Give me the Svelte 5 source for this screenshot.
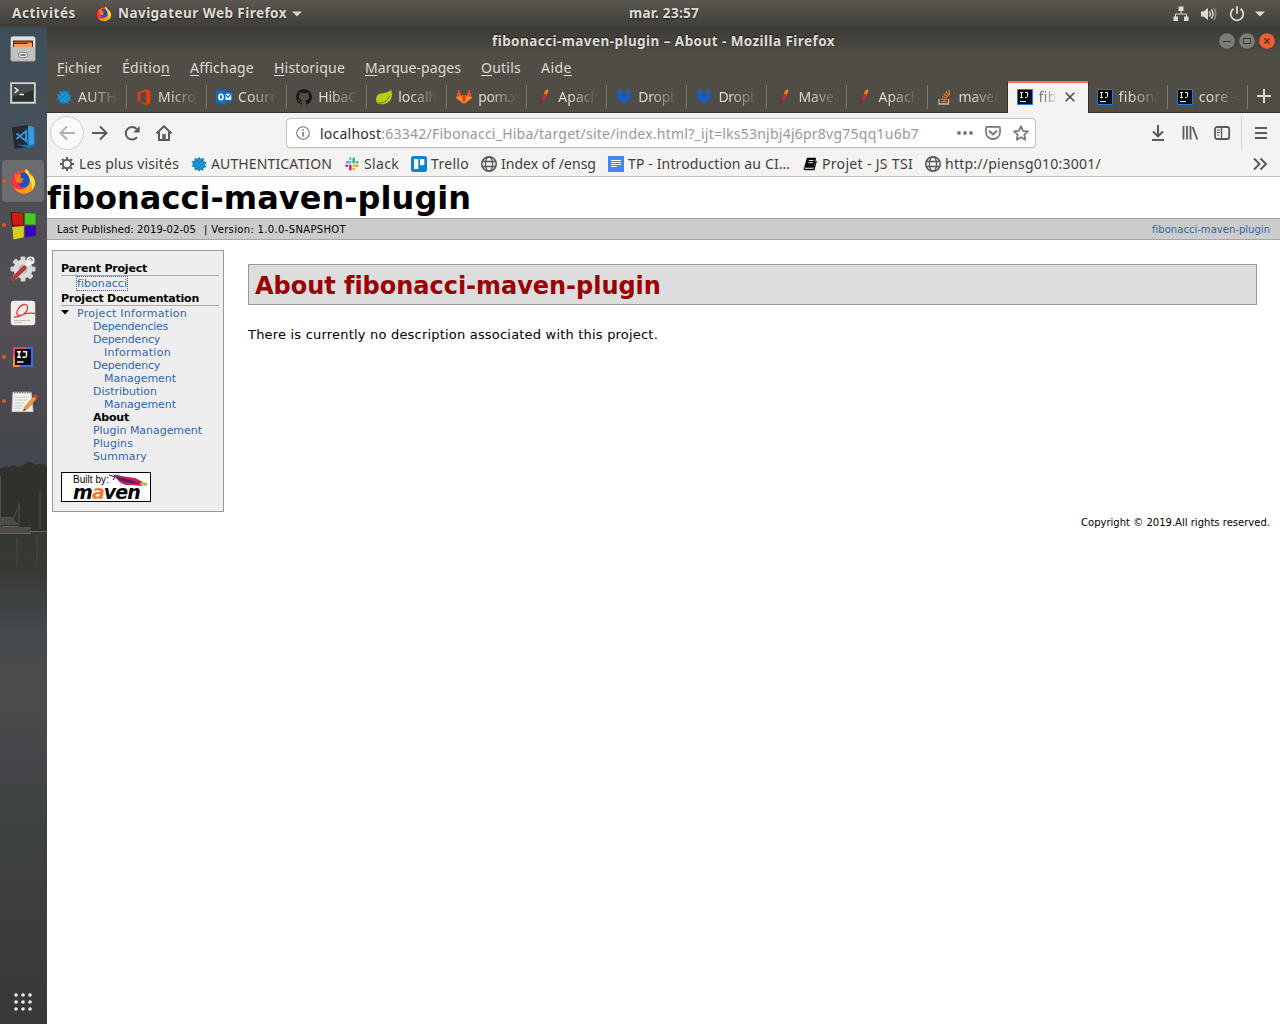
<script>
  // Spreads a label's letters so it fills the given width.
  function fit(node, width) {
    const natural = node.getBoundingClientRect().width;
    node.style.letterSpacing = (width - natural) / node.textContent.length + 'px';
  }

  const menus = [
    { a: '', k: 'F', b: 'ichier', w: 45 },
    { a: 'Éditio', k: 'n', b: '', w: 48 },
    { a: '', k: 'A', b: 'ffichage', w: 64 },
    { a: '', k: 'H', b: 'istorique', w: 71 },
    { a: '', k: 'M', b: 'arque-pages', w: 96 },
    { a: '', k: 'O', b: 'utils', w: 40 },
    { a: 'Aid', k: 'e', b: '', w: 31 }
  ];
  const tabs = [
    { icon: 'auth', t: 'AUTH', w: 39 },
    { icon: 'office', t: 'Micro', w: 38 },
    { icon: 'outlook', t: 'Courr', w: 38 },
    { icon: 'github', t: 'HibaC', w: 39 },
    { icon: 'spring', t: 'localh', w: 39 },
    { icon: 'gitlab', t: 'pom.x', w: 39 },
    { icon: 'feather', t: 'Apach', w: 41 },
    { icon: 'dropbox', t: 'Dropb', w: 40 },
    { icon: 'dropbox', t: 'Dropb', w: 40 },
    { icon: 'feather', t: 'Maven', w: 44 },
    { icon: 'feather', t: 'Apach', w: 41 },
    { icon: 'stack', t: 'maven', w: 44 },
    { icon: 'idea', t: 'fibo', w: 27, active: true },
    { icon: 'idea', t: 'fibona', w: 44 },
    { icon: 'idea', t: 'core –', w: 41 }
  ];
  const bookmarks = [
    { icon: 'gear', t: 'Les plus visités', w: 100 },
    { icon: 'auth', t: 'AUTHENTICATION', w: 121 },
    { icon: 'slack', t: 'Slack', w: 35 },
    { icon: 'trello', t: 'Trello', w: 38 },
    { icon: 'globe', t: 'Index of /ensg', w: 95 },
    { icon: 'doc', t: 'TP - Introduction au CI…', w: 162 },
    { icon: 'book', t: 'Projet - JS TSI', w: 91 },
    { icon: 'globe', t: 'http://piensg010:3001/', w: 156 }
  ];
  const dock = [
    { icon: 'files' }, { icon: 'terminal' }, { icon: 'vscode' },
    { icon: 'firefox', run: true, active: true },
    { icon: 'blocks', run: true }, { icon: 'tools' }, { icon: 'pdf' },
    { icon: 'ideaDock', run: true }, { icon: 'notes', run: true }
  ];
  const docs = [
    { lines: ['Dependencies'], w: [75] },
    { lines: ['Dependency', 'Information'], w: [67, 67] },
    { lines: ['Dependency', 'Management'], w: [67, 72] },
    { lines: ['Distribution', 'Management'], w: [64, 72] },
    { lines: ['About'], w: [36], current: true },
    { lines: ['Plugin Management'], w: [109] },
    { lines: ['Plugins'], w: [40] },
    { lines: ['Summary'], w: [54] }
  ];
  const dots = [6, 13, 20];
  const teeth = [0, 45, 90, 135, 180, 225, 270, 315];
</script>

{#snippet fox()}
  <circle cx="12" cy="13" r="10.6" fill="#ff4f1e" />
  <path d="M1.4 14C1 9 2.500 6 4.500 4.200l.8 2.300c1.500-.8 3-.7 4.200.2L8 10l5 8-5 5.200C4 22 1.600 18 1.400 14z" fill="#ff2d3d" />
  <path d="M14 1c2 1 3 2.700 3.500 4.700 2.800 1.300 5.700 4.500 5.100 9.200C21.800 21 16.500 24 11.500 23.600 7 23 4 20.500 3 17c2.500 3 6 3.600 9 2.400 5-2 6-7 3.500-10.400C14 7 13 4 14 1z" fill="#ffa514" />
  <path d="M14 1c2 1 3 2.700 3.500 4.700 2.800 1.300 5.700 4.500 5.100 9.200-.3 2.300-1.500 4.400-3 5.800 1.200-5-.3-8.700-3-11.200C14 7 13 4 14 1z" fill="#ffe335" />
  <path d="M7 9c1-3.500 4-5.500 7-4.500 1.500 1 3 3 3.500 5.500 1 4-1 7.500-4.500 8-3.500.3-6-2-6.300-5 1.500 1.300 3.500 1.300 5-.3-2-.2-2.600-1.300-2-2.500C9 9.500 8.200 9 7 9z" fill="#1b4fc4" />
  <path d="M4.500 4.200l.8 2.300c2-.8 4-.4 4.700.5l-1 2.200 3.200.6c.3 1.200-1 1.900-2.400 2.300l.5 1.600c-2 1-4.300.3-5.300-1.700C4 10 3.800 7 4.500 4.200z" fill="#ff7a18" />
{/snippet}

{#snippet icon(name)}
  {#if name === 'auth'}
    <svg class="i16" viewBox="0 0 16 16"><path d="M3.500 2l3 .8L8 .8l1.700 2L13 2l-.5 3.300 3 1-1.400 2.400 1.400 2.600-3 .4-.2 3-3-.9L8 15.700l-1.600-2-3 .6.3-3-3-1L2 7.700.5 5.200l3-.2z" fill="#1186c8" /><path d="M3 9.500L9.500 3.500M5 12L12.500 5M8 13l5.500-5" stroke="#5aafe0" stroke-width=".7" /></svg>
  {:else if name === 'office'}
    <svg class="i16" viewBox="0 0 16 16"><path d="M1.500 3.500L10 .2l4.500 1.300v13L10 15.900l-8.500-3L10 14V2.800L4.500 4v7.600l-3 1.300z" fill="#e43d08" /></svg>
  {:else if name === 'outlook'}
    <svg class="i16" viewBox="0 0 16 16"><path d="M0 2l9.500-2v16L0 14z" fill="#0a6fc4" /><path d="M9.500 3H16v10H9.500z" fill="#0a6fc4" /><path d="M9.500 4.800h5.700v6H9.500z" fill="#fff" /><path d="M10 6l2 2.300L15 5" fill="none" stroke="#0a6fc4" stroke-width="1.200" /><ellipse cx="5" cy="8" rx="2" ry="2.700" fill="none" stroke="#fff" stroke-width="1.600" /></svg>
  {:else if name === 'github'}
    <svg class="i16" viewBox="0 0 16 16"><path fill="#191717" d="M8 0C3.580 0 0 3.580 0 8c0 3.540 2.290 6.530 5.470 7.590.4.070.55-.17.55-.38 0-.19-.01-.82-.01-1.490-2.010.37-2.530-.49-2.690-.94-.09-.23-.48-.94-.82-1.130-.28-.15-.68-.52-.01-.53.63-.01 1.080.58 1.230.82.72 1.210 1.870.87 2.330.66.070-.52.28-.87.51-1.070-1.780-.2-3.640-.89-3.640-3.950 0-.87.31-1.590.82-2.150-.08-.2-.36-1.020.08-2.120 0 0 .67-.21 2.200.82a7.500 7.500 0 0 1 4 0c1.530-1.040 2.200-.82 2.200-.82.44 1.100.16 1.920.08 2.120.51.56.82 1.270.82 2.150 0 3.070-1.870 3.750-3.650 3.950.29.25.54.73.54 1.480 0 1.070-.01 1.930-.01 2.200 0 .21.15.46.55.38A8 8 0 0 0 16 8c0-4.420-3.580-8-8-8z" /></svg>
  {:else if name === 'spring'}
    <svg class="i16" viewBox="0 0 16 16"><path d="M15 .5c1.800 5 1 10-2.500 12.600C9 15.800 4 16 1.500 14.200-.5 12-.4 8 2 5.800 5 3.200 12.500 5 15 .5z" fill="#b9ce12" /><path d="M2 14c5 .5 10-2 11.500-7.500" fill="none" stroke="#5e7f0c" stroke-width="1" /></svg>
  {:else if name === 'gitlab'}
    <svg class="i16" viewBox="0 0 16 16"><path d="M0 9L3 .8 5.200 6.500h5.600L13 .8 16 9l-8 6z" fill="#fc8a28" /><path d="M5 6.500h6L8 15z" fill="#e24329" /><path d="M0 9L3 .8 5.200 6.500zM16 9L13 .8l-2.200 5.700z" fill="#e8502b" /></svg>
  {:else if name === 'feather'}
    <svg class="i16" viewBox="0 0 16 16"><path d="M5 14c0-4.500 1.800-8.500 4.700-13L12 0q.6 1.500 0 3C10.500 7 8.800 10.500 6.600 12.500z" fill="#d3203c" /><path d="M9 2L12 0q.6 1.500 0 3l-1.200 2.800q-1.300-1.200-3-.8z" fill="#f3801f" /><path d="M5.200 10.500L4 16l2.900-4z" fill="#5a2a5c" /></svg>
  {:else if name === 'dropbox'}
    <svg class="i16" viewBox="0 0 16 16"><path fill="#0a62f5" d="M4.200.8L8 3.300 4.200 5.800.2 3.300zM11.800.8l4 2.500-4 2.500L8 3.300zM4.200 5.800L8 8.300l-3.800 2.500L.2 8.300zM11.800 5.800l4 2.500-4 2.500L8 8.300zM8 9.300l3.800 2.500L8 14.500l-3.800-2.700z" /></svg>
  {:else if name === 'stack'}
    <svg class="i16" viewBox="0 0 16 16"><path d="M2 10v5h9.500v-5" fill="none" stroke="#b9b9b5" stroke-width="1.300" /><path d="M4 12.800h5.500M4.200 10.200l5.300.8M5 7.500l4.900 2M6.700 4.700l4 3.400M9 2.300l2.700 4.300M12 .8l.8 5" stroke="#ee7518" stroke-width="1.300" /></svg>
  {:else if name === 'idea'}
    <svg class="i16" viewBox="0 0 16 16"><path d="M.5.500h15v15H.5z" fill="#080808" stroke="#137bf4" /><path d="M3 3.500h3M3 8.500h3M4.500 3.500v5M8 3.500h2.500v3.700q0 1.300-1.300 1.300H8" fill="none" stroke="#e8e8e8" /><path d="M3 12.500h6" stroke="#fff" /></svg>
  {:else if name === 'gear'}
    <svg class="i16" viewBox="0 0 16 16"><circle cx="8" cy="8" r="4.200" fill="none" stroke="#5a5a5a" stroke-width="1.900" />{#each teeth as r}<path d="M7 1h2v2.600H7z" fill="#5a5a5a" transform="rotate({r} 8 8)" />{/each}</svg>
  {:else if name === 'slack'}
    <svg class="i16" viewBox="0 0 16 16" stroke-width="2.600" stroke-linecap="round"><path d="M6.300 2.500v.2M2.800 6.300h3.500" stroke="#36c5f0" /><path d="M9.700 2.700v3.600M13.300 6.300h-.2" stroke="#2eb67d" /><path d="M9.700 9.700h3.600M9.700 13.300v-.2" stroke="#ecb22e" /><path d="M2.700 9.700h.2M6.300 13.300V9.700" stroke="#e01e5a" /></svg>
  {:else if name === 'trello'}
    <svg class="i16" viewBox="0 0 16 16"><rect width="16" height="16" rx="2.500" fill="#0b84cf" /><rect x="3" y="3" width="4.300" height="10" rx=".6" fill="#fff" /><rect x="9" y="3" width="4.300" height="6.300" rx=".6" fill="#fff" /></svg>
  {:else if name === 'globe'}
    <svg class="i16" viewBox="0 0 16 16" fill="none" stroke="#5a5a5a" stroke-width="1.300"><circle cx="8" cy="8" r="7.200" stroke-width="1.600" /><ellipse cx="8" cy="8" rx="3.600" ry="7" /><path d="M1.500 5.500h13M1.500 10.500h13" /></svg>
  {:else if name === 'doc'}
    <svg class="i16" viewBox="0 0 16 16"><path d="M0 0h16v16H0z" fill="#4285f4" /><path d="M3 4.500h10M3 6.500h10M3 8.500h10M3 10.500h6" stroke="#fff" /></svg>
  {:else if name === 'book'}
    <svg class="i16" viewBox="0 0 16 16"><path d="M5.500 2.500h7.800L11 11H3z" fill="#0a0a0a" stroke="#0a0a0a" stroke-width="1.500" stroke-linejoin="round" /><path d="M6.800 4.500h4.800M6.300 6.700h4.800" stroke="#ddd" /><path d="M2.300 11.500c-.3 1.500.3 2 1.200 2h8.400L14.300 5" fill="none" stroke="#0a0a0a" stroke-width="1.300" /></svg>
  {:else if name === 'files'}
    <svg class="i26" viewBox="0 0 26 26"><rect x=".5" y=".5" width="25" height="25" rx="2" fill="#aaaaa7" /><path d="M1 2.500q0-2 2-2h20q2 0 2 2V11H1z" fill="#e0e0dd" /><path d="M3 4.500h20V11H3z" fill="#4a2413" /><path d="M4 5.500h18v1.700H4z" fill="#b8531c" /><path d="M4 8h13l1-1h4v4H4z" fill="#eda066" /><path d="M1 11h24v13.500H1z" fill="#c0c0bd" /><rect x="8.500" y="16.500" width="9" height="5" rx="2.500" fill="#e8e8e6" stroke="#8d8d8a" /><path d="M10.500 19h5" stroke="#444" stroke-width="1.300" /></svg>
  {:else if name === 'terminal'}
    <svg class="i26" viewBox="0 0 26 26"><path d="M1.200 3.200h23.600v19.600H1.200z" fill="#2a2e2d" stroke="#d2d2ce" stroke-width="2" /><path d="M2.200 4.200h21.600v6l-21.600 7z" fill="#454947" /><path d="M4.500 7.500l3.500 2.700-3.500 2.700M9.500 14.500h4.500" fill="none" stroke="#eee" stroke-width="1.500" /></svg>
  {:else if name === 'vscode'}
    <svg class="i26" viewBox="0 0 26 26"><path d="M2 3.500L18 1l3 21.500L4.500 25z" fill="#262a2f" /><path d="M18 1.500l7 2V21l-6 3-13-3.500 11 .5z" fill="#1673b8" /><path d="M18 1.500l5.500 1.700L24 20l-5 1.500z" fill="#3a9be0" /><path d="M6.500 9.500L16 17V7.200L6.500 15" fill="none" stroke="#2f95dc" stroke-width="2" /></svg>
  {:else if name === 'firefox'}
    <svg class="i28" viewBox="0 0 24 25">{@render fox()}</svg>
  {:else if name === 'blocks'}
    <svg class="i28" viewBox="0 0 28 28"><path d="M.5 0L14 1v13l-12 1z" fill="#1a1a18" /><path d="M1.500.5l12 .5v12.500L3 14z" fill="#cf1c0c" /><path d="M15.500 1l11 .8v11.200H15.500z" fill="#3fce22" /><path d="M2.500 15.500l12-1-.3 12L3.500 28.500z" fill="#d3ce20" /><path d="M15.700 14.200h11v10.500l-11 1.500z" fill="#3604ba" /></svg>
  {:else if name === 'tools'}
    <svg class="i26" viewBox="0 0 26 26">{#each teeth as r}<rect x="10.500" y=".5" width="5" height="5" rx="1" fill="#d4d5d3" transform="rotate({r} 13 13)" />{/each}<circle cx="13" cy="13" r="7" fill="#b9bab8" stroke="#dcdddb" stroke-width="5" /><path d="M15 10l4.500-4" stroke="#fafafa" stroke-width="3" stroke-linecap="round" /><circle cx="20.500" cy="4.500" r="3.200" fill="none" stroke="#fafafa" stroke-width="1.800" /><path d="M3 23L14.500 11.500" stroke="#b83a38" stroke-width="4.200" stroke-linecap="round" /></svg>
  {:else if name === 'pdf'}
    <svg class="i26" viewBox="0 0 26 26"><rect x=".8" y=".8" width="24.400" height="24.400" rx="3" fill="#eeeeec" /><path d="M4 17C10 17.500 18 13 17.500 7 17 2.500 11 4 8 9.500 5 15 8 16.500 13 14.500q6-2 12-1" fill="none" stroke="#dd3b40" stroke-width="1.300" /><path d="M4 20.500h17M4 22.500h8" stroke="#c4c4c2" /></svg>
  {:else if name === 'ideaDock'}
    <svg class="i22" viewBox="0 0 22 22"><path d="M1 1h20v20H1z" fill="#3b6fe0" /><path d="M1 1h13L8 21H1z" fill="#ef3f6d" /><path d="M1 9l7 12H1z" fill="#f59032" /><path d="M3 3h16v16H3z" fill="#0a0a0a" /><path d="M5 5.700h4M5 11.300h4M7 5.700v5.600M11 5.700h3.500v3.900q0 1.700-1.700 1.700H10.500" fill="none" stroke="#fff" stroke-width="1.400" /><path d="M5 16h6.500" stroke="#fff" stroke-width="1.400" /></svg>
  {:else if name === 'notes'}
    <svg class="i28" viewBox="0 0 28 28"><path d="M3 4.500h19L24 24.500H2z" fill="#f1f1ef" stroke="#ccc" stroke-width=".7" /><path d="M4.500 4.500h17" stroke="#777" stroke-width="2.600" stroke-dasharray="1.300 1.300" /><path d="M5 9.500h14M5 12.500h14M5 15.500h10M4.500 18.500h9M4.500 21h7" stroke="#c3c3c3" stroke-width=".9" /><path d="M15 20L24.500 8.800l3 2.300L18 22l-4 1.500z" fill="#f19a38" stroke="#a96a2a" stroke-width=".5" /><path d="M24.500 8.800l1.800-2.200 3 2.300-1.800 2.200z" fill="#e23b3b" /><path d="M14 23.500l.6-2 1.400 1.200z" fill="#222" /></svg>
  {/if}
{/snippet}

<div class="desktop">
  <header class="topbar">
    <div class="left">
      <b use:fit={64}>Activités</b>
      <svg class="i16 ff" viewBox="0 0 24 25">{@render fox()}</svg>
      <b use:fit={169}>Navigateur Web Firefox</b>
      <svg class="caret" viewBox="0 0 10 6"><path d="M0 .5h10L5 5.500z" fill="#d5d3cc" /></svg>
    </div>
    <b class="clock" use:fit={70}>mar. 23:57</b>
    <div class="status">
      <svg class="i16" viewBox="0 0 16 16" fill="#dcdad5"><path d="M5.500.5h5v4.500h-5zM.5 10.500h4.500v4.500H.5zM11 10.500h4.500v4.500H11z" /><path d="M8 5v3M2.500 11V8h11v3" fill="none" stroke="#dcdad5" /></svg>
      <svg class="i16" viewBox="0 0 16 16"><path d="M0 5.500h2.500L7 2v12L2.500 10.500H0z" fill="#dcdad5" /><path d="M8.500 5.500q1.500 2.500 0 5M10.500 3.500q3 4.500 0 9" fill="none" stroke="#dcdad5" stroke-width="1.500" /><path d="M13 2q3.500 6 0 12" fill="none" stroke="#8c8a84" stroke-width="1.500" /></svg>
      <svg class="i16" viewBox="0 0 16 16" fill="none" stroke="#dcdad5" stroke-width="1.800"><path d="M4.500 2.800a6.300 6.300 0 1 0 7 0M8 .3v7.500" /></svg>
      <svg class="caret" viewBox="0 0 10 6"><path d="M0 .5h10L5 5.500z" fill="#dcdad5" /></svg>
    </div>
  </header>

  <div class="workspace">
    <aside class="dock">
      <svg class="harbour" viewBox="0 0 47 120">
        <path d="M0 7q4-4 9-2 5-3 8 0 6-1 9-4 5-2 10 2 6-3 11 1v66H0z" fill="#30312d" />
        <path d="M0 70h47v50H0z" fill="#363933" />
        <path d="M.5 14v54M40 29v38M19 41v26M11 62l8-18" stroke="#5f5f5d" stroke-width=".7" fill="none" />
        <path d="M0 55h12l3 4 4 4H0z" fill="#4b4b48" />
        <path d="M0 65h31v6H0z" fill="#4e4c49" />
        <path d="M0 71.500h31M30 69.500h17M2 64.500h16" stroke="#67655f" />
        <path d="M17 75v30M37 73v32" stroke="#4b4e49" />
      </svg>
      {#each dock as d}
        <div class="slot" class:run={d.run} class:active={d.active}>{@render icon(d.icon)}</div>
      {/each}
      <svg class="grid" viewBox="0 0 26 26">{#each dots as y}{#each dots as x}<circle cx={x} cy={y} r="1.800" fill="#eee" />{/each}{/each}</svg>
    </aside>

    <section class="window">
      <div class="title">
        <b use:fit={343}>fibonacci-maven-plugin – About - Mozilla Firefox</b>
        <div class="controls">
          <svg class="i16" viewBox="0 0 16 16"><circle cx="8" cy="8" r="7.800" fill="#7d7b76" /><path d="M4 8.500h8" stroke="#3b3a36" /></svg>
          <svg class="i16" viewBox="0 0 16 16"><circle cx="8" cy="8" r="7.800" fill="#7d7b76" /><path d="M4.500 5.500h7v5h-7z" fill="none" stroke="#3b3a36" /></svg>
          <svg class="i16" viewBox="0 0 16 16"><circle cx="8" cy="8" r="7.800" fill="#ee6034" /><path d="M5.500 5.500l5 5M10.500 5.500l-5 5" stroke="#4b2415" stroke-width="1.200" /></svg>
        </div>
      </div>
      <nav class="menu">
        {#each menus as m}<span use:fit={m.w}>{m.a}<u>{m.k}</u>{m.b}</span>{/each}
      </nav>
      <div class="tabs">
        {#each tabs as t}
          <div class="tab" class:active={t.active}>
            {@render icon(t.icon)}
            <div class="label"><span use:fit={t.w}>{t.t}</span></div>
            {#if t.active}<svg class="close" viewBox="0 0 10 10"><path d="M.7.7l8.600 8.600M9.300.7L.7 9.300" stroke="#4c4c4c" stroke-width="1.600" /></svg>{/if}
          </div>
        {/each}
        <svg class="plus" viewBox="0 0 14 14"><path d="M7 0v14M0 7h14" stroke="#d8d5cc" stroke-width="2" /></svg>
      </div>

      <div class="toolbar">
        <div class="back"><svg class="i16" viewBox="0 0 16 16" fill="none" stroke="#b3b2b1" stroke-width="2"><path d="M16 8H1.500M8 1.500L1.500 8 8 14.500" /></svg></div>
        <svg class="i16 fwd" viewBox="0 0 16 16" fill="none" stroke="#5a5a59" stroke-width="2"><path d="M0 8h14.500M8 1.500L14.500 8 8 14.500" /></svg>
        <svg class="i16" viewBox="0 0 16 16" fill="none" stroke="#5a5a59" stroke-width="2"><path d="M13 12.200A6.300 6.300 0 1 1 12.700 4" /><path d="M15.700 1v6.500H9.200z" fill="#5a5a59" stroke="none" /></svg>
        <svg class="i16" viewBox="0 0 16 16" fill="none" stroke="#5a5a59" stroke-width="2"><path d="M.5 8.500L8 1.300l7.500 7.200M3 7v8h10V7" stroke-linejoin="round" /><path d="M6.300 9h3.400v6H6.300z" fill="#5a5a59" stroke="none" /></svg>
        <div class="url">
          <svg class="info" viewBox="0 0 14 14"><circle cx="7" cy="7" r="6.300" fill="none" stroke="#737373" stroke-width="1.100" /><path d="M7 6v4.500M7 3.200v1.600" stroke="#737373" stroke-width="1.600" /></svg>
          <span class="addr" use:fit={599}><i>localhost</i>:63342/Fibonacci_Hiba/target/site/index.html?_ijt=lks53njbj4j6pr8vg75qq1u6b7</span>
          <div class="actions">
            <svg class="i16" viewBox="0 0 16 16" fill="#777"><circle cx="2" cy="8" r="1.900" /><circle cx="8" cy="8" r="1.900" /><circle cx="14" cy="8" r="1.900" /></svg>
            <svg class="i16" viewBox="0 0 16 16" fill="none" stroke="#777" stroke-width="1.700"><path d="M2 1.800h12q1 0 1 1V7.500a7 6.700 0 0 1-14 0V2.800q0-1 1-1z" /><path d="M4.500 6.200L8 9.500l3.500-3.300" stroke-linecap="round" stroke-width="2" /></svg>
            <svg class="i16" viewBox="0 0 16 16" fill="none" stroke="#777" stroke-width="1.700" stroke-linejoin="round"><path d="M8 1.200l2 4.600 5 .5-3.700 3.400 1 5L8 12.200l-4.300 2.500 1-5L1 6.300l5-.5z" /></svg>
          </div>
        </div>
        <div class="tools">
          <svg class="i16" viewBox="0 0 16 16" fill="none" stroke="#5a5a59" stroke-width="2"><path d="M8 0v11M3 6.500L8 11.300l5-4.800M2 15h12" /></svg>
          <svg class="i16" viewBox="0 0 16 16" stroke="#5a5a59" stroke-width="1.800"><path d="M1.500 1v13.500M5 1v13.500M8.500 1v13.500M10.700 2l4.600 12.500" /></svg>
          <svg class="i16" viewBox="0 0 16 16" fill="none" stroke="#5a5a59" stroke-width="1.800"><rect x="1" y="2" width="14.200" height="12" rx="2" /><path d="M7.500 2v12" stroke-width="1.300" /><path d="M3 5h3M3 7.500h3M3 10h2" stroke-width="1" /></svg>
        </div>
        <div class="burger"><svg class="i16" viewBox="0 0 16 16"><path d="M2 3h12M2 8h12M2 13h12" stroke="#5a5a59" stroke-width="2" /></svg></div>
      </div>
      <div class="bookmarks">
        {#each bookmarks as b}
          <div class="mark">{@render icon(b.icon)}<span use:fit={b.w}>{b.t}</span></div>
        {/each}
        <svg class="i16 more" viewBox="0 0 16 16" fill="none" stroke="#5a5a59" stroke-width="2"><path d="M2 2.500L7.500 8 2 13.500M8.500 2.500L14 8l-5.500 5.500" /></svg>
      </div>

      <main class="page">
        <h1><span use:fit={423}>fibonacci-maven-plugin</span></h1>
        <div class="crumbs">
          <div class="info-line"><span use:fit={139}>Last Published: 2019-02-05</span><span use:fit={142}>| Version: 1.0.0-SNAPSHOT</span></div>
          <a href="#top" use:fit={118}>fibonacci-maven-plugin</a>
        </div>
        <div class="columns">
          <aside class="side">
            <h5><span use:fit={86}>Parent Project</span></h5>
            <div class="parent"><a href="#parent" use:fit={50}>fibonacci</a></div>
            <h5><span use:fit={138}>Project Documentation</span></h5>
            <div class="info-root"><svg class="tri" viewBox="0 0 8 5"><path d="M0 0h8L4 4.500z" /></svg><a href="#info" use:fit={110}>Project Information</a></div>
            <ul>
              {#each docs as d}
                <li class:current={d.current}>{#each d.lines as l, i}<div><span use:fit={d.w[i]}>{l}</span></div>{/each}</li>
              {/each}
            </ul>
            <div class="badge">
              <div class="by"><span use:fit={36}>Built by:</span>
                <svg class="quill" viewBox="0 0 40 13"><path d="M4 1q4-1 8 1l14 2 8 4-1 4-12-1q-8 1-13-6z" fill="#c81f4e" /><path d="M6 3q12 1 25 7l-9-1Q12 8 6 3z" fill="#48206d" /><path d="M32 8l7 1-2 3-6-1z" fill="#c5b34b" /><path d="M0 1l6 2-2 3" fill="none" stroke="#222" /></svg>
              </div>
              <b use:fit={67}>m<em>a</em>ven</b>
            </div>
          </aside>
          <article>
            <h2><span use:fit={405}>About fibonacci-maven-plugin</span></h2>
            <p><span use:fit={410}>There is currently no description associated with this project.</span></p>
          </article>
        </div>
        <footer><span use:fit={189}>Copyright © 2019.All rights reserved.</span></footer>
      </main>
    </section>
  </div>
</div>

<style>
  :global(body) { margin: 0; overflow: hidden; }
  .desktop { width: 1280px; height: 1024px; display: flex; flex-direction: column; font: 14px 'Noto Sans', 'Open Sans', sans-serif; background: #fff; }
  .desktop * { box-sizing: border-box; }
  svg { display: block; flex: none; overflow: visible; }
  span, b, a { white-space: nowrap; }
  .i16 { width: 16px; height: 16px; }
  .i22 { width: 22px; height: 22px; }
  .i26 { width: 26px; height: 26px; }
  .i28 { width: 27px; height: 27px; }
  .caret { width: 10px; height: 6px; }

  .topbar { height: 27px; flex: none; display: grid; grid-template-columns: 615px auto 1fr; align-items: center; background: linear-gradient(#5a574f, #403e39); color: #dfdbd2; padding: 0 15px 0 12px; line-height: 20px; }
  .topbar b { font-size: 13.500px; font-weight: 700; margin-top: -2px; text-shadow: 0 1px 2px #222; }
  .left { display: flex; align-items: center; }
  .left .ff { margin: 0 6px 0 20px; }
  .left .caret { margin-left: 5px; }
  .clock { margin-left: 2px; }
  .status { display: flex; justify-content: flex-end; align-items: center; gap: 12px; }
  .status .caret { margin-left: -2px; }

  .workspace { flex: 1; display: flex; min-height: 0; }
  .dock { position: relative; width: 47px; flex: none; display: flex; flex-direction: column; background: linear-gradient(#3e4e59, #46505b 9%, #4f4e53 18%, #534f54 30%, #49494e 39%, #42474d 44%, #373934 54%, #3c403e 57%, #454a4e 61%, #4e4b4b 67%, #464549 73%, #3f4444 78%, #3c3d3b 90%, #393836); }
  .harbour { position: absolute; left: 0; top: 435px; width: 47px; height: 120px; -webkit-mask-image: linear-gradient(#000 70%, transparent); mask-image: linear-gradient(#000 70%, transparent); overflow: hidden; }
  .slot { position: relative; height: 44px; padding-right: 1px; display: flex; align-items: center; justify-content: center; }
  .slot.active { height: 42px; margin: 1px 3px 1px 2px; padding: 0; border-radius: 4px; background: #6a6c70; }
  .slot.run::before { content: ''; position: absolute; left: 2px; top: 20px; width: 4px; height: 4px; border-radius: 50%; background: #e95420; }
  .slot.active::before { left: 0; top: 19px; }
  .grid { width: 26px; height: 26px; margin: auto 0 9px 10px; }

  .window { flex: 1; min-width: 0; display: flex; flex-direction: column; }
  .title { height: 28px; flex: none; display: grid; grid-template-columns: 445px auto 1fr; align-items: center; background: linear-gradient(#3b3a36, #504d46); color: #dfdbd2; padding-right: 5px; }
  .title b { grid-column: 2; font-size: 13.500px; font-weight: 700; text-shadow: 0 -1px 1px #222; }
  .controls { display: flex; gap: 4px; justify-content: flex-end; }
  .menu { height: 26px; flex: none; display: flex; gap: 20px; padding: 0 10px; align-items: center; background: #504d46; color: #dfdbd2; line-height: 20px; }
  .menu u { text-decoration: underline; text-decoration-thickness: 1px; text-underline-offset: 2px; }
  .tabs { height: 32px; flex: none; display: flex; align-items: stretch; background: #504d46; border-bottom: 1px solid #35332f; color: #dfdbd2; }
  .tab { position: relative; width: 80.060px; flex: none; display: flex; align-items: center; padding-left: 9px; gap: 6px; }
  .tab::after { content: ''; position: absolute; right: 0; top: 4px; width: 1px; height: 24px; background: #7b7973; }
  .tab:has(+ .active)::after, .tab.active::after { display: none; }
  .tab.active { height: 32px; padding-bottom: 2px; background: #f4f3f2; border-top: 2px solid #f07746; box-shadow: -1px 0 #35332f, 1px 0 #35332f; color: #77756f; }
  .label { width: 45px; line-height: 22px; -webkit-mask-image: linear-gradient(90deg, #000 25%, transparent 88%); mask-image: linear-gradient(90deg, #000 25%, transparent 88%); }
  .active .label { width: 21px; }
  .label span { display: inline-block; }
  .close { width: 10px; height: 10px; margin-left: -1px; }
  .plus { width: 14px; height: 14px; margin: 8px 0 0 9px; }

  .toolbar { height: 40px; flex: none; display: flex; align-items: center; background: #f4f3f2; padding-left: 3px; gap: 16px; }
  .back { width: 34px; height: 34px; border: 1px solid #cfcecb; border-radius: 50%; background: #fafafa; display: grid; place-items: center; }
  .fwd { margin-left: -8px; }
  .url { width: 750px; height: 30px; margin-left: 98px; border: 1px solid #c6c1bb; border-radius: 4px; background: #fff; display: flex; align-items: center; padding: 0 6px 0 9px; box-shadow: 0 1px 1px #0001; color: #989898; }
  .info { width: 14px; height: 14px; margin-right: 10px; }
  .addr i { font-style: normal; color: #2d2d2d; }
  .actions { display: flex; gap: 12px; margin-left: auto; }
  .tools { display: flex; gap: 16px; margin-left: auto; }
  .burger { width: 39px; height: 34px; margin-left: -5px; border-left: 1px solid #d7d5d3; padding: 9px 0 0 11px; }
  .bookmarks { height: 24px; flex: none; display: flex; align-items: center; gap: 12px; padding: 0 12px; background: #f4f3f2; border-bottom: 1px solid #bfbdbb; color: #3f3f3f; padding-bottom: 1px; }
  .mark { display: flex; align-items: center; gap: 4px; line-height: 20px; }
  .more { margin-left: auto; }

  .page { flex: 1; background: #fff; font-family: 'DejaVu Sans', Verdana, sans-serif; color: #000; }
  h1, h2, h5, p, ul { margin: 0; padding: 0; }
  h1 { font-size: 32px; line-height: 41px; height: 41px; padding-top: 1px; }
  a { color: #36a; text-decoration: none; }
  .crumbs { height: 22px; display: flex; justify-content: space-between; align-items: center; background: #ccc; border: solid #a5a5a5; border-width: 1px 0; padding: 0 10px; font-size: 10px; }
  .info-line { display: flex; gap: 8px; }
  .columns { display: flex; padding: 10px 23px 0 5px; height: 272px; }
  .side { width: 172px; height: 262px; flex: none; padding: 10px 4px 0 8px; background: #eee; border: 1px solid #999; font-size: 11px; line-height: 13px; }
  h5 { height: 15px; font-size: 11px; line-height: 16px; border-bottom: 1px solid #aaa; }
  .parent { height: 15px; padding: 1px 0 0 16px; }
  .parent a { display: inline-block; outline: 1px dotted #36a; }
  .info-root { display: flex; align-items: center; height: 14px; padding-top: 1px; }
  .tri { width: 8px; height: 5px; margin: -3px 8px 0 0; }
  ul { list-style: none; padding-left: 32px; color: #36a; }
  li div { height: 13px; }
  li div + div { padding-left: 11px; }
  li.current { color: #000; font-weight: bold; }
  .badge { width: 90px; height: 30px; margin-top: 9px; border: 1px solid #000; background: #fff; padding: 1px 0 0 11px; }
  .by { display: flex; height: 11px; font: 10px/11px 'Liberation Sans', sans-serif; }
  .quill { width: 40px; height: 13px; }
  .badge b { display: block; width: max-content; font: italic bold 19px/14px 'DejaVu Sans', sans-serif; }
  .badge em { color: #f57c2c; }
  article { flex: 1; padding: 14px 0 0 24px; }
  h2 { height: 41px; padding-left: 6px; border: 1px solid #999; background: #ddd; color: #900; font-size: 24px; line-height: 42px; }
  p { font-size: 13px; line-height: 18px; margin-top: 21px; }
  footer { text-align: right; font-size: 10px; line-height: 14px; padding: 4px 10px 0 0; }
</style>
